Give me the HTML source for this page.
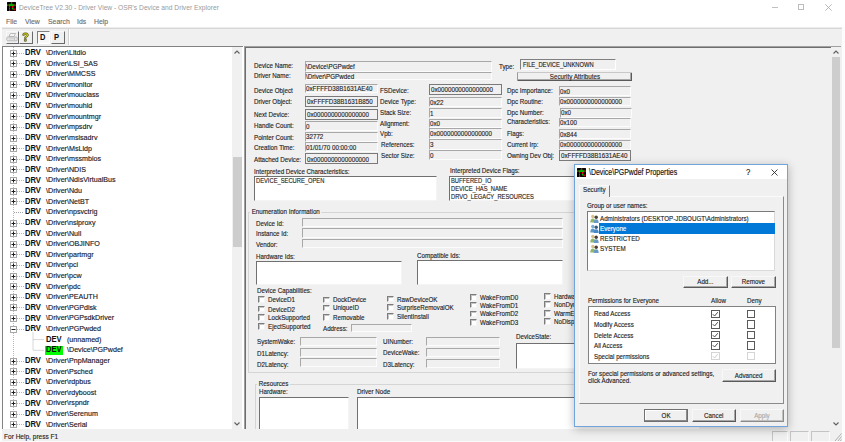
<!DOCTYPE html><html><head><meta charset="utf-8"><style>
html,body{margin:0;padding:0;width:845px;height:442px;overflow:hidden;background:#f0f0f0;font-family:"Liberation Sans",sans-serif;position:relative}
div,span,svg{position:absolute}
.t{white-space:nowrap;transform-origin:0 50%;display:block;-webkit-text-stroke:0.15px currentColor}
</style></head><body>
<div style="left:0px;top:0px;width:845px;height:442px;background:#fcfcfc"></div>
<div style="left:0px;top:0px;width:845px;height:27px;background:#fff"></div>
<svg style="left:7px;top:2px" width="9" height="9" viewBox="0 0 9 9"><rect width="9" height="9" rx="0.5" fill="#000"/><rect x="1.5" y="2.3" width="6" height="1.6" fill="#0c0"/><rect x="3.5" y="1.5" width="2" height="1" fill="#0c0"/><rect x="2" y="6" width="1" height="1.2" fill="#0a0"/><path d="M5 6L6.5 7.5" stroke="#0c0" stroke-width="1.2"/><rect x="4" y="0" width="1.2" height="1.8" fill="#f00"/><rect x="0" y="2.3" width="1.2" height="1.8" fill="#f00"/><rect x="7.6" y="2.3" width="1.2" height="1.8" fill="#f00"/><rect x="2" y="4" width="1.2" height="1.8" fill="#f00"/><rect x="5" y="4" width="1.2" height="1.8" fill="#f00"/><rect x="2" y="7.2" width="1.2" height="1.8" fill="#f00"/><rect x="7.2" y="6.5" width="1.2" height="1.8" fill="#f00"/></svg>
<span class="t" style="left:19px;top:2px;font-size:8px;line-height:12px;transform:scaleX(0.835);color:#9a9a9a;-webkit-text-stroke:0">DeviceTree V2.30 - Driver View - OSR's Device and Driver Explorer</span>
<div style="left:772px;top:7px;width:6px;height:1px;background:#c0c0c0"></div>
<div style="left:798px;top:3.5px;width:6.2999999999999545px;height:6.300000000000001px;border:1px solid #bcbcbc;box-sizing:border-box"></div>
<svg style="left:825px;top:3.5px" width="7" height="7" viewBox="0 0 7 7"><path d="M0.3 0.3L6.7 6.7M6.7 0.3L0.3 6.7" stroke="#a8a8a8" stroke-width="0.8"/></svg>
<span class="t" style="left:6px;top:16px;font-size:7.8px;line-height:12px;transform:scaleX(0.88);color:#6e6e6e;">File</span>
<span class="t" style="left:25px;top:16px;font-size:7.8px;line-height:12px;transform:scaleX(0.88);color:#6e6e6e;">View</span>
<span class="t" style="left:48px;top:16px;font-size:7.8px;line-height:12px;transform:scaleX(0.88);color:#6e6e6e;">Search</span>
<span class="t" style="left:77px;top:16px;font-size:7.8px;line-height:12px;transform:scaleX(0.88);color:#6e6e6e;">Ids</span>
<span class="t" style="left:94px;top:16px;font-size:7.8px;line-height:12px;transform:scaleX(0.88);color:#6e6e6e;">Help</span>
<div style="left:2px;top:27px;width:839.5px;height:415px;background:#f0f0f0"></div>
<div style="left:2px;top:27px;width:839.5px;height:1px;background:#ececec"></div>
<div style="left:2px;top:28px;width:839.5px;height:1px;background:#d6d6d6"></div>
<div style="left:5.5px;top:31px;width:13.0px;height:12.5px;background:#f0f0f0;border-top:1px solid #f8f8f8;border-left:1px solid #f8f8f8;border-bottom:1px solid #6a6a6a;border-right:1px solid #6a6a6a;box-sizing:border-box"></div>
<div style="left:18.5px;top:31px;width:14.0px;height:12.5px;background:#f0f0f0;border-top:1px solid #f8f8f8;border-left:1px solid #f8f8f8;border-bottom:1px solid #6a6a6a;border-right:1px solid #6a6a6a;box-sizing:border-box"></div>
<div style="left:37px;top:31px;width:13px;height:12.5px;background:#f8f8f8;border-top:1px solid #808080;border-left:1px solid #808080;border-bottom:1px solid #fff;border-right:1px solid #fff;box-sizing:border-box"></div>
<div style="left:50.5px;top:31px;width:14.0px;height:12.5px;background:#f0f0f0;border-top:1px solid #f8f8f8;border-left:1px solid #f8f8f8;border-bottom:1px solid #6a6a6a;border-right:1px solid #6a6a6a;box-sizing:border-box"></div>
<svg style="left:6px;top:31px" width="12" height="12" viewBox="0 0 12 12"><path d="M4.5 2.5L9.5 2.5L8 5.5L3 5.5Z" fill="#f4f4f4" stroke="#b4b4b4" stroke-width="0.9"/><path d="M1.8 6H10.2Q11.2 6 11.2 7V8.8Q11.2 9.8 10.2 9.8H1.8Q0.8 9.8 0.8 8.8V7Q0.8 6 1.8 6Z" fill="#ececec" stroke="#b0b0b0" stroke-width="0.9"/><path d="M2.5 7.9H8" stroke="#c4c4c4" stroke-width="0.9"/><circle cx="8.6" cy="7.9" r="0.6" fill="#a0a0a0"/></svg>
<svg style="left:21px;top:32px" width="9" height="10" viewBox="0 0 9 10"><path d="M1.6 3.2Q1.6 0.8 4.4 0.8Q7.4 0.8 7.4 3.1Q7.4 4.4 5.8 5.1Q5.2 5.4 5.2 6.3H3.5Q3.5 4.8 4.6 4.2Q5.6 3.7 5.5 3.1Q5.4 2.3 4.4 2.3Q3.4 2.3 3.3 3.4Z M3.4 7.2H5.3V9.2H3.4Z" fill="#e6e600" stroke="#3a3a20" stroke-width="0.7"/></svg>
<span class="t" style="left:40.3px;top:32px;font-size:8.2px;line-height:12px;transform:scaleX(0.92);color:#111;font-weight:bold;-webkit-text-stroke:0;">D</span>
<span class="t" style="left:54.4px;top:32px;font-size:8.2px;line-height:12px;transform:scaleX(0.92);color:#111;font-weight:bold;-webkit-text-stroke:0;">P</span>
<div style="left:68px;top:29px;width:1px;height:16px;background:#d0d0d0"></div>
<div style="left:69px;top:29px;width:1px;height:16px;background:#ffffff"></div>
<div style="left:2px;top:46px;width:240.5px;height:383px;background:#fff;border-top:1px solid #828282;border-left:1px solid #828282;box-sizing:border-box"></div>
<div style="left:232px;top:47px;width:10px;height:382px;background:#f0f0f0"></div>
<div style="left:232.5px;top:157px;width:9.0px;height:90px;background:#cdcdcd"></div>
<svg style="left:233px;top:49px" width="8" height="6" viewBox="0 0 8 6"><path d="M1.5 4.5L4 2L6.5 4.5" stroke="#606060" stroke-width="1.1" fill="none"/></svg>
<svg style="left:233px;top:421px" width="8" height="6" viewBox="0 0 8 6"><path d="M1.5 1.5L4 4L6.5 1.5" stroke="#606060" stroke-width="1.1" fill="none"/></svg>
<svg style="left:0;top:0" width="242" height="429" viewBox="0 0 242 429"><path d="M13.5 47V424.1" stroke="#b8b8b8" stroke-width="1" stroke-dasharray="1 1"/><rect x="10.5" y="50.5" width="6" height="6" fill="#fff" stroke="#a8a8a8" stroke-width="1"/><rect x="11.5" y="53" width="4" height="1" fill="#202020"/><rect x="13" y="51.5" width="1" height="4" fill="#202020"/><path d="M17 53.5H24" stroke="#b8b8b8" stroke-width="1" stroke-dasharray="1 1"/><rect x="10.5" y="60.5" width="6" height="6" fill="#fff" stroke="#a8a8a8" stroke-width="1"/><rect x="11.5" y="63" width="4" height="1" fill="#202020"/><rect x="13" y="61.5" width="1" height="4" fill="#202020"/><path d="M17 63.5H24" stroke="#b8b8b8" stroke-width="1" stroke-dasharray="1 1"/><rect x="10.5" y="71.5" width="6" height="6" fill="#fff" stroke="#a8a8a8" stroke-width="1"/><rect x="11.5" y="74" width="4" height="1" fill="#202020"/><rect x="13" y="72.5" width="1" height="4" fill="#202020"/><path d="M17 74.5H24" stroke="#b8b8b8" stroke-width="1" stroke-dasharray="1 1"/><rect x="10.5" y="81.5" width="6" height="6" fill="#fff" stroke="#a8a8a8" stroke-width="1"/><rect x="11.5" y="84" width="4" height="1" fill="#202020"/><rect x="13" y="82.5" width="1" height="4" fill="#202020"/><path d="M17 84.5H24" stroke="#b8b8b8" stroke-width="1" stroke-dasharray="1 1"/><rect x="10.5" y="92.5" width="6" height="6" fill="#fff" stroke="#a8a8a8" stroke-width="1"/><rect x="11.5" y="95" width="4" height="1" fill="#202020"/><rect x="13" y="93.5" width="1" height="4" fill="#202020"/><path d="M17 95.5H24" stroke="#b8b8b8" stroke-width="1" stroke-dasharray="1 1"/><rect x="10.5" y="103.5" width="6" height="6" fill="#fff" stroke="#a8a8a8" stroke-width="1"/><rect x="11.5" y="106" width="4" height="1" fill="#202020"/><rect x="13" y="104.5" width="1" height="4" fill="#202020"/><path d="M17 106.5H24" stroke="#b8b8b8" stroke-width="1" stroke-dasharray="1 1"/><rect x="10.5" y="113.5" width="6" height="6" fill="#fff" stroke="#a8a8a8" stroke-width="1"/><rect x="11.5" y="116" width="4" height="1" fill="#202020"/><rect x="13" y="114.5" width="1" height="4" fill="#202020"/><path d="M17 116.5H24" stroke="#b8b8b8" stroke-width="1" stroke-dasharray="1 1"/><rect x="10.5" y="124.5" width="6" height="6" fill="#fff" stroke="#a8a8a8" stroke-width="1"/><rect x="11.5" y="127" width="4" height="1" fill="#202020"/><rect x="13" y="125.5" width="1" height="4" fill="#202020"/><path d="M17 127.5H24" stroke="#b8b8b8" stroke-width="1" stroke-dasharray="1 1"/><rect x="10.5" y="135.5" width="6" height="6" fill="#fff" stroke="#a8a8a8" stroke-width="1"/><rect x="11.5" y="138" width="4" height="1" fill="#202020"/><rect x="13" y="136.5" width="1" height="4" fill="#202020"/><path d="M17 138.5H24" stroke="#b8b8b8" stroke-width="1" stroke-dasharray="1 1"/><rect x="10.5" y="145.5" width="6" height="6" fill="#fff" stroke="#a8a8a8" stroke-width="1"/><rect x="11.5" y="148" width="4" height="1" fill="#202020"/><rect x="13" y="146.5" width="1" height="4" fill="#202020"/><path d="M17 148.5H24" stroke="#b8b8b8" stroke-width="1" stroke-dasharray="1 1"/><rect x="10.5" y="156.5" width="6" height="6" fill="#fff" stroke="#a8a8a8" stroke-width="1"/><rect x="11.5" y="159" width="4" height="1" fill="#202020"/><rect x="13" y="157.5" width="1" height="4" fill="#202020"/><path d="M17 159.5H24" stroke="#b8b8b8" stroke-width="1" stroke-dasharray="1 1"/><rect x="10.5" y="166.5" width="6" height="6" fill="#fff" stroke="#a8a8a8" stroke-width="1"/><rect x="11.5" y="169" width="4" height="1" fill="#202020"/><rect x="13" y="167.5" width="1" height="4" fill="#202020"/><path d="M17 169.5H24" stroke="#b8b8b8" stroke-width="1" stroke-dasharray="1 1"/><rect x="10.5" y="177.5" width="6" height="6" fill="#fff" stroke="#a8a8a8" stroke-width="1"/><rect x="11.5" y="180" width="4" height="1" fill="#202020"/><rect x="13" y="178.5" width="1" height="4" fill="#202020"/><path d="M17 180.5H24" stroke="#b8b8b8" stroke-width="1" stroke-dasharray="1 1"/><rect x="10.5" y="188.5" width="6" height="6" fill="#fff" stroke="#a8a8a8" stroke-width="1"/><rect x="11.5" y="191" width="4" height="1" fill="#202020"/><rect x="13" y="189.5" width="1" height="4" fill="#202020"/><path d="M17 191.5H24" stroke="#b8b8b8" stroke-width="1" stroke-dasharray="1 1"/><rect x="10.5" y="198.5" width="6" height="6" fill="#fff" stroke="#a8a8a8" stroke-width="1"/><rect x="11.5" y="201" width="4" height="1" fill="#202020"/><rect x="13" y="199.5" width="1" height="4" fill="#202020"/><path d="M17 201.5H24" stroke="#b8b8b8" stroke-width="1" stroke-dasharray="1 1"/><path d="M14 212.5H24" stroke="#a0a0a0" stroke-width="1" stroke-dasharray="1 1"/><rect x="10.5" y="220.5" width="6" height="6" fill="#fff" stroke="#a8a8a8" stroke-width="1"/><rect x="11.5" y="223" width="4" height="1" fill="#202020"/><rect x="13" y="221.5" width="1" height="4" fill="#202020"/><path d="M17 223.5H24" stroke="#b8b8b8" stroke-width="1" stroke-dasharray="1 1"/><rect x="10.5" y="230.5" width="6" height="6" fill="#fff" stroke="#a8a8a8" stroke-width="1"/><rect x="11.5" y="233" width="4" height="1" fill="#202020"/><rect x="13" y="231.5" width="1" height="4" fill="#202020"/><path d="M17 233.5H24" stroke="#b8b8b8" stroke-width="1" stroke-dasharray="1 1"/><rect x="10.5" y="241.5" width="6" height="6" fill="#fff" stroke="#a8a8a8" stroke-width="1"/><rect x="11.5" y="244" width="4" height="1" fill="#202020"/><rect x="13" y="242.5" width="1" height="4" fill="#202020"/><path d="M17 244.5H24" stroke="#b8b8b8" stroke-width="1" stroke-dasharray="1 1"/><rect x="10.5" y="251.5" width="6" height="6" fill="#fff" stroke="#a8a8a8" stroke-width="1"/><rect x="11.5" y="254" width="4" height="1" fill="#202020"/><rect x="13" y="252.5" width="1" height="4" fill="#202020"/><path d="M17 254.5H24" stroke="#b8b8b8" stroke-width="1" stroke-dasharray="1 1"/><rect x="10.5" y="262.5" width="6" height="6" fill="#fff" stroke="#a8a8a8" stroke-width="1"/><rect x="11.5" y="265" width="4" height="1" fill="#202020"/><rect x="13" y="263.5" width="1" height="4" fill="#202020"/><path d="M17 265.5H24" stroke="#b8b8b8" stroke-width="1" stroke-dasharray="1 1"/><rect x="10.5" y="273.5" width="6" height="6" fill="#fff" stroke="#a8a8a8" stroke-width="1"/><rect x="11.5" y="276" width="4" height="1" fill="#202020"/><rect x="13" y="274.5" width="1" height="4" fill="#202020"/><path d="M17 276.5H24" stroke="#b8b8b8" stroke-width="1" stroke-dasharray="1 1"/><rect x="10.5" y="283.5" width="6" height="6" fill="#fff" stroke="#a8a8a8" stroke-width="1"/><rect x="11.5" y="286" width="4" height="1" fill="#202020"/><rect x="13" y="284.5" width="1" height="4" fill="#202020"/><path d="M17 286.5H24" stroke="#b8b8b8" stroke-width="1" stroke-dasharray="1 1"/><rect x="10.5" y="294.5" width="6" height="6" fill="#fff" stroke="#a8a8a8" stroke-width="1"/><rect x="11.5" y="297" width="4" height="1" fill="#202020"/><rect x="13" y="295.5" width="1" height="4" fill="#202020"/><path d="M17 297.5H24" stroke="#b8b8b8" stroke-width="1" stroke-dasharray="1 1"/><rect x="10.5" y="304.5" width="6" height="6" fill="#fff" stroke="#a8a8a8" stroke-width="1"/><rect x="11.5" y="307" width="4" height="1" fill="#202020"/><rect x="13" y="305.5" width="1" height="4" fill="#202020"/><path d="M17 307.5H24" stroke="#b8b8b8" stroke-width="1" stroke-dasharray="1 1"/><rect x="10.5" y="315.5" width="6" height="6" fill="#fff" stroke="#a8a8a8" stroke-width="1"/><rect x="11.5" y="318" width="4" height="1" fill="#202020"/><rect x="13" y="316.5" width="1" height="4" fill="#202020"/><path d="M17 318.5H24" stroke="#b8b8b8" stroke-width="1" stroke-dasharray="1 1"/><rect x="10.5" y="326.5" width="6" height="6" fill="#fff" stroke="#a8a8a8" stroke-width="1"/><rect x="11.5" y="329" width="4" height="1" fill="#202020"/><path d="M17 329.5H24" stroke="#b8b8b8" stroke-width="1" stroke-dasharray="1 1"/><rect x="10.5" y="358.5" width="6" height="6" fill="#fff" stroke="#a8a8a8" stroke-width="1"/><rect x="11.5" y="361" width="4" height="1" fill="#202020"/><rect x="13" y="359.5" width="1" height="4" fill="#202020"/><path d="M17 361.5H24" stroke="#b8b8b8" stroke-width="1" stroke-dasharray="1 1"/><rect x="10.5" y="368.5" width="6" height="6" fill="#fff" stroke="#a8a8a8" stroke-width="1"/><rect x="11.5" y="371" width="4" height="1" fill="#202020"/><rect x="13" y="369.5" width="1" height="4" fill="#202020"/><path d="M17 371.5H24" stroke="#b8b8b8" stroke-width="1" stroke-dasharray="1 1"/><rect x="10.5" y="379.5" width="6" height="6" fill="#fff" stroke="#a8a8a8" stroke-width="1"/><rect x="11.5" y="382" width="4" height="1" fill="#202020"/><rect x="13" y="380.5" width="1" height="4" fill="#202020"/><path d="M17 382.5H24" stroke="#b8b8b8" stroke-width="1" stroke-dasharray="1 1"/><rect x="10.5" y="389.5" width="6" height="6" fill="#fff" stroke="#a8a8a8" stroke-width="1"/><rect x="11.5" y="392" width="4" height="1" fill="#202020"/><rect x="13" y="390.5" width="1" height="4" fill="#202020"/><path d="M17 392.5H24" stroke="#b8b8b8" stroke-width="1" stroke-dasharray="1 1"/><rect x="10.5" y="400.5" width="6" height="6" fill="#fff" stroke="#a8a8a8" stroke-width="1"/><rect x="11.5" y="403" width="4" height="1" fill="#202020"/><rect x="13" y="401.5" width="1" height="4" fill="#202020"/><path d="M17 403.5H24" stroke="#b8b8b8" stroke-width="1" stroke-dasharray="1 1"/><rect x="10.5" y="411.5" width="6" height="6" fill="#fff" stroke="#a8a8a8" stroke-width="1"/><rect x="11.5" y="414" width="4" height="1" fill="#202020"/><rect x="13" y="412.5" width="1" height="4" fill="#202020"/><path d="M17 414.5H24" stroke="#b8b8b8" stroke-width="1" stroke-dasharray="1 1"/><rect x="10.5" y="421.5" width="6" height="6" fill="#fff" stroke="#a8a8a8" stroke-width="1"/><rect x="11.5" y="424" width="4" height="1" fill="#202020"/><rect x="13" y="422.5" width="1" height="4" fill="#202020"/><path d="M17 424.5H24" stroke="#b8b8b8" stroke-width="1" stroke-dasharray="1 1"/><path d="M33 332.5V350.3" stroke="#b0b0b0" stroke-width="1" stroke-dasharray="1 1"/><path d="M33.5 339.6H44M33.5 350.3H44" stroke="#b0b0b0" stroke-width="1" stroke-dasharray="1 1"/></svg>
<span class="t" style="left:25.3px;top:47px;font-size:8.2px;line-height:12px;transform:scaleX(0.93);color:#111;font-weight:bold;-webkit-text-stroke:0;">DRV</span>
<span class="t" style="left:45.5px;top:47px;font-size:7.5px;line-height:12px;transform:scaleX(0.95);color:#1a1a28;">\Driver\Lltdio</span>
<span class="t" style="left:25.3px;top:58px;font-size:8.2px;line-height:12px;transform:scaleX(0.93);color:#111;font-weight:bold;-webkit-text-stroke:0;">DRV</span>
<span class="t" style="left:45.5px;top:58px;font-size:7.5px;line-height:12px;transform:scaleX(0.95);color:#1a1a28;">\Driver\LSI_SAS</span>
<span class="t" style="left:25.3px;top:68px;font-size:8.2px;line-height:12px;transform:scaleX(0.93);color:#111;font-weight:bold;-webkit-text-stroke:0;">DRV</span>
<span class="t" style="left:45.5px;top:68px;font-size:7.5px;line-height:12px;transform:scaleX(0.95);color:#1a1a28;">\Driver\MMCSS</span>
<span class="t" style="left:25.3px;top:79px;font-size:8.2px;line-height:12px;transform:scaleX(0.93);color:#111;font-weight:bold;-webkit-text-stroke:0;">DRV</span>
<span class="t" style="left:45.5px;top:79px;font-size:7.5px;line-height:12px;transform:scaleX(0.95);color:#1a1a28;">\Driver\monitor</span>
<span class="t" style="left:25.3px;top:90px;font-size:8.2px;line-height:12px;transform:scaleX(0.93);color:#111;font-weight:bold;-webkit-text-stroke:0;">DRV</span>
<span class="t" style="left:45.5px;top:89px;font-size:7.5px;line-height:12px;transform:scaleX(0.95);color:#1a1a28;">\Driver\mouclass</span>
<span class="t" style="left:25.3px;top:100px;font-size:8.2px;line-height:12px;transform:scaleX(0.93);color:#111;font-weight:bold;-webkit-text-stroke:0;">DRV</span>
<span class="t" style="left:45.5px;top:100px;font-size:7.5px;line-height:12px;transform:scaleX(0.95);color:#1a1a28;">\Driver\mouhid</span>
<span class="t" style="left:25.3px;top:111px;font-size:8.2px;line-height:12px;transform:scaleX(0.93);color:#111;font-weight:bold;-webkit-text-stroke:0;">DRV</span>
<span class="t" style="left:45.5px;top:111px;font-size:7.5px;line-height:12px;transform:scaleX(0.95);color:#1a1a28;">\Driver\mountmgr</span>
<span class="t" style="left:25.3px;top:121px;font-size:8.2px;line-height:12px;transform:scaleX(0.93);color:#111;font-weight:bold;-webkit-text-stroke:0;">DRV</span>
<span class="t" style="left:45.5px;top:121px;font-size:7.5px;line-height:12px;transform:scaleX(0.95);color:#1a1a28;">\Driver\mpsdrv</span>
<span class="t" style="left:25.3px;top:132px;font-size:8.2px;line-height:12px;transform:scaleX(0.93);color:#111;font-weight:bold;-webkit-text-stroke:0;">DRV</span>
<span class="t" style="left:45.5px;top:132px;font-size:7.5px;line-height:12px;transform:scaleX(0.95);color:#1a1a28;">\Driver\msisadrv</span>
<span class="t" style="left:25.3px;top:143px;font-size:8.2px;line-height:12px;transform:scaleX(0.93);color:#111;font-weight:bold;-webkit-text-stroke:0;">DRV</span>
<span class="t" style="left:45.5px;top:143px;font-size:7.5px;line-height:12px;transform:scaleX(0.95);color:#1a1a28;">\Driver\MsLldp</span>
<span class="t" style="left:25.3px;top:153px;font-size:8.2px;line-height:12px;transform:scaleX(0.93);color:#111;font-weight:bold;-webkit-text-stroke:0;">DRV</span>
<span class="t" style="left:45.5px;top:153px;font-size:7.5px;line-height:12px;transform:scaleX(0.95);color:#1a1a28;">\Driver\mssmbios</span>
<span class="t" style="left:25.3px;top:164px;font-size:8.2px;line-height:12px;transform:scaleX(0.93);color:#111;font-weight:bold;-webkit-text-stroke:0;">DRV</span>
<span class="t" style="left:45.5px;top:164px;font-size:7.5px;line-height:12px;transform:scaleX(0.95);color:#1a1a28;">\Driver\NDIS</span>
<span class="t" style="left:25.3px;top:175px;font-size:8.2px;line-height:12px;transform:scaleX(0.93);color:#111;font-weight:bold;-webkit-text-stroke:0;">DRV</span>
<span class="t" style="left:45.5px;top:174px;font-size:7.5px;line-height:12px;transform:scaleX(0.95);color:#1a1a28;">\Driver\NdisVirtualBus</span>
<span class="t" style="left:25.3px;top:185px;font-size:8.2px;line-height:12px;transform:scaleX(0.93);color:#111;font-weight:bold;-webkit-text-stroke:0;">DRV</span>
<span class="t" style="left:45.5px;top:185px;font-size:7.5px;line-height:12px;transform:scaleX(0.95);color:#1a1a28;">\Driver\Ndu</span>
<span class="t" style="left:25.3px;top:196px;font-size:8.2px;line-height:12px;transform:scaleX(0.93);color:#111;font-weight:bold;-webkit-text-stroke:0;">DRV</span>
<span class="t" style="left:45.5px;top:196px;font-size:7.5px;line-height:12px;transform:scaleX(0.95);color:#1a1a28;">\Driver\NetBT</span>
<span class="t" style="left:25.3px;top:206px;font-size:8.2px;line-height:12px;transform:scaleX(0.93);color:#111;font-weight:bold;-webkit-text-stroke:0;">DRV</span>
<span class="t" style="left:45.5px;top:206px;font-size:7.5px;line-height:12px;transform:scaleX(0.95);color:#1a1a28;">\Driver\npsvctrig</span>
<span class="t" style="left:25.3px;top:217px;font-size:8.2px;line-height:12px;transform:scaleX(0.93);color:#111;font-weight:bold;-webkit-text-stroke:0;">DRV</span>
<span class="t" style="left:45.5px;top:217px;font-size:7.5px;line-height:12px;transform:scaleX(0.95);color:#1a1a28;">\Driver\nsiproxy</span>
<span class="t" style="left:25.3px;top:228px;font-size:8.2px;line-height:12px;transform:scaleX(0.93);color:#111;font-weight:bold;-webkit-text-stroke:0;">DRV</span>
<span class="t" style="left:45.5px;top:228px;font-size:7.5px;line-height:12px;transform:scaleX(0.95);color:#1a1a28;">\Driver\Null</span>
<span class="t" style="left:25.3px;top:238px;font-size:8.2px;line-height:12px;transform:scaleX(0.93);color:#111;font-weight:bold;-webkit-text-stroke:0;">DRV</span>
<span class="t" style="left:45.5px;top:238px;font-size:7.5px;line-height:12px;transform:scaleX(0.95);color:#1a1a28;">\Driver\OBJINFO</span>
<span class="t" style="left:25.3px;top:249px;font-size:8.2px;line-height:12px;transform:scaleX(0.93);color:#111;font-weight:bold;-webkit-text-stroke:0;">DRV</span>
<span class="t" style="left:45.5px;top:249px;font-size:7.5px;line-height:12px;transform:scaleX(0.95);color:#1a1a28;">\Driver\partmgr</span>
<span class="t" style="left:25.3px;top:260px;font-size:8.2px;line-height:12px;transform:scaleX(0.93);color:#111;font-weight:bold;-webkit-text-stroke:0;">DRV</span>
<span class="t" style="left:45.5px;top:259px;font-size:7.5px;line-height:12px;transform:scaleX(0.95);color:#1a1a28;">\Driver\pci</span>
<span class="t" style="left:25.3px;top:270px;font-size:8.2px;line-height:12px;transform:scaleX(0.93);color:#111;font-weight:bold;-webkit-text-stroke:0;">DRV</span>
<span class="t" style="left:45.5px;top:270px;font-size:7.5px;line-height:12px;transform:scaleX(0.95);color:#1a1a28;">\Driver\pcw</span>
<span class="t" style="left:25.3px;top:281px;font-size:8.2px;line-height:12px;transform:scaleX(0.93);color:#111;font-weight:bold;-webkit-text-stroke:0;">DRV</span>
<span class="t" style="left:45.5px;top:281px;font-size:7.5px;line-height:12px;transform:scaleX(0.95);color:#1a1a28;">\Driver\pdc</span>
<span class="t" style="left:25.3px;top:291px;font-size:8.2px;line-height:12px;transform:scaleX(0.93);color:#111;font-weight:bold;-webkit-text-stroke:0;">DRV</span>
<span class="t" style="left:45.5px;top:291px;font-size:7.5px;line-height:12px;transform:scaleX(0.95);color:#1a1a28;">\Driver\PEAUTH</span>
<span class="t" style="left:25.3px;top:302px;font-size:8.2px;line-height:12px;transform:scaleX(0.93);color:#111;font-weight:bold;-webkit-text-stroke:0;">DRV</span>
<span class="t" style="left:45.5px;top:302px;font-size:7.5px;line-height:12px;transform:scaleX(0.95);color:#1a1a28;">\Driver\PGPdisk</span>
<span class="t" style="left:25.3px;top:313px;font-size:8.2px;line-height:12px;transform:scaleX(0.93);color:#111;font-weight:bold;-webkit-text-stroke:0;">DRV</span>
<span class="t" style="left:45.5px;top:312px;font-size:7.5px;line-height:12px;transform:scaleX(0.95);color:#1a1a28;">\Driver\PGPsdkDriver</span>
<span class="t" style="left:25.3px;top:323px;font-size:8.2px;line-height:12px;transform:scaleX(0.93);color:#111;font-weight:bold;-webkit-text-stroke:0;">DRV</span>
<span class="t" style="left:45.5px;top:323px;font-size:7.5px;line-height:12px;transform:scaleX(0.95);color:#1a1a28;">\Driver\PGPwded</span>
<span class="t" style="left:25.3px;top:355px;font-size:8.2px;line-height:12px;transform:scaleX(0.93);color:#111;font-weight:bold;-webkit-text-stroke:0;">DRV</span>
<span class="t" style="left:45.5px;top:355px;font-size:7.5px;line-height:12px;transform:scaleX(0.95);color:#1a1a28;">\Driver\PnpManager</span>
<span class="t" style="left:25.3px;top:366px;font-size:8.2px;line-height:12px;transform:scaleX(0.93);color:#111;font-weight:bold;-webkit-text-stroke:0;">DRV</span>
<span class="t" style="left:45.5px;top:366px;font-size:7.5px;line-height:12px;transform:scaleX(0.95);color:#1a1a28;">\Driver\Psched</span>
<span class="t" style="left:25.3px;top:376px;font-size:8.2px;line-height:12px;transform:scaleX(0.93);color:#111;font-weight:bold;-webkit-text-stroke:0;">DRV</span>
<span class="t" style="left:45.5px;top:376px;font-size:7.5px;line-height:12px;transform:scaleX(0.95);color:#1a1a28;">\Driver\rdpbus</span>
<span class="t" style="left:25.3px;top:387px;font-size:8.2px;line-height:12px;transform:scaleX(0.93);color:#111;font-weight:bold;-webkit-text-stroke:0;">DRV</span>
<span class="t" style="left:45.5px;top:387px;font-size:7.5px;line-height:12px;transform:scaleX(0.95);color:#1a1a28;">\Driver\rdyboost</span>
<span class="t" style="left:25.3px;top:398px;font-size:8.2px;line-height:12px;transform:scaleX(0.93);color:#111;font-weight:bold;-webkit-text-stroke:0;">DRV</span>
<span class="t" style="left:45.5px;top:397px;font-size:7.5px;line-height:12px;transform:scaleX(0.95);color:#1a1a28;">\Driver\rspndr</span>
<span class="t" style="left:25.3px;top:408px;font-size:8.2px;line-height:12px;transform:scaleX(0.93);color:#111;font-weight:bold;-webkit-text-stroke:0;">DRV</span>
<span class="t" style="left:45.5px;top:408px;font-size:7.5px;line-height:12px;transform:scaleX(0.95);color:#1a1a28;">\Driver\Serenum</span>
<span class="t" style="left:25.3px;top:419px;font-size:8.2px;line-height:12px;transform:scaleX(0.93);color:#111;font-weight:bold;-webkit-text-stroke:0;">DRV</span>
<span class="t" style="left:45.5px;top:419px;font-size:7.5px;line-height:12px;transform:scaleX(0.95);color:#1a1a28;">\Driver\Serial</span>
<span class="t" style="left:46px;top:334px;font-size:8.2px;line-height:12px;transform:scaleX(0.93);color:#111;font-weight:bold;-webkit-text-stroke:0;">DEV</span>
<span class="t" style="left:66.5px;top:334px;font-size:7.5px;line-height:12px;transform:scaleX(0.95);color:#1a1a28;">(unnamed)</span>
<div style="left:44.6px;top:345.55999999999995px;width:18.4px;height:9.199999999999989px;background:#00ff00"></div>
<span class="t" style="left:46px;top:344px;font-size:8.2px;line-height:12px;transform:scaleX(0.93);color:#111;font-weight:bold;-webkit-text-stroke:0;">DEV</span>
<span class="t" style="left:66.5px;top:344px;font-size:7.5px;line-height:12px;transform:scaleX(0.95);color:#1a1a28;">\Device\PGPwdef</span>
<div style="left:244px;top:46px;width:597.3px;height:383px;background:#f0f0f0;border-top:1px solid #a0a0a0;border-left:1px solid #a0a0a0;box-shadow:inset 1px 1px 0 #6e6e6e;box-sizing:border-box"></div>
<div style="left:242.5px;top:46px;width:1.0px;height:383px;background:#ffffff"></div>
<div style="left:831px;top:47px;width:10px;height:382px;background:#f0f0f0"></div>
<div style="left:832px;top:57px;width:8.299999999999955px;height:290.5px;background:#cdcdcd"></div>
<svg style="left:832px;top:49px" width="8" height="6" viewBox="0 0 8 6"><path d="M1.5 4.5L4 2L6.5 4.5" stroke="#606060" stroke-width="1.1" fill="none"/></svg>
<svg style="left:832px;top:421px" width="8" height="6" viewBox="0 0 8 6"><path d="M1.5 1.5L4 4L6.5 1.5" stroke="#606060" stroke-width="1.1" fill="none"/></svg>
<span class="t" style="left:253.6px;top:60px;font-size:7.6px;line-height:12px;transform:scaleX(0.82);color:#1e1e1e;">Device Name:</span>
<span class="t" style="left:253.6px;top:70px;font-size:7.6px;line-height:12px;transform:scaleX(0.82);color:#1e1e1e;">Driver Name:</span>
<div style="left:305px;top:61.2px;width:186.60000000000002px;height:10.5px;background:#f0f0f0;border-top:1px solid #a8a8a8;border-left:1px solid #a8a8a8;border-bottom:1px solid #fcfcfc;border-right:1px solid #fcfcfc;box-sizing:border-box"></div>
<span class="t" style="left:306px;top:61px;font-size:7.6px;line-height:12px;transform:scaleX(0.82);color:#1e1e1e;">\Device\PGPwdef</span>
<div style="left:305px;top:71.7px;width:186.60000000000002px;height:8.5px;background:#f0f0f0;border-top:1px solid #a8a8a8;border-left:1px solid #a8a8a8;border-bottom:1px solid #fcfcfc;border-right:1px solid #fcfcfc;box-sizing:border-box"></div>
<span class="t" style="left:306px;top:71px;font-size:7.6px;line-height:12px;transform:scaleX(0.82);color:#1e1e1e;">\Driver\PGPwded</span>
<span class="t" style="left:498.7px;top:61px;font-size:7.6px;line-height:12px;transform:scaleX(0.82);color:#1e1e1e;">Type:</span>
<div style="left:520.3px;top:59.2px;width:96.20000000000005px;height:10.599999999999994px;background:#f0f0f0;border-top:1px solid #808080;border-left:1px solid #808080;border-bottom:1px solid #fff;border-right:1px solid #fff;box-sizing:border-box"></div>
<span class="t" style="left:522.5px;top:59px;font-size:7.6px;line-height:12px;transform:scaleX(0.76);color:#1e1e1e;">FILE_DEVICE_UNKNOWN</span>
<div style="left:516.5px;top:71.7px;width:115.89999999999998px;height:9.099999999999994px;background:#f0f0f0;border-top:1px solid #f8f8f8;border-left:1px solid #f8f8f8;border-bottom:1px solid #5a5a5a;border-right:1px solid #5a5a5a;box-shadow:inset -1px -1px 0 #a8a8a8;box-sizing:border-box"></div>
<span class="t" style="left:516.5px;top:71.7px;width:141.3px;height:9.099999999999994px;line-height:9.099999999999994px;text-align:center;font-size:7.6px;transform:scaleX(0.82);color:#1e1e1e">Security Attributes</span>
<div style="left:516.5px;top:71.7px;width:115.89999999999998px;height:9.099999999999994px;border-left:1px solid #9a9a9a;border-top:1px solid #c8c8c8;box-sizing:border-box"></div>
<span class="t" style="left:253.5px;top:85px;font-size:7.6px;line-height:12px;transform:scaleX(0.82);color:#1e1e1e;">Device Object</span>
<div style="left:305px;top:84px;width:72.5px;height:9.200000000000003px;background:#f0f0f0;border-top:1px solid #a8a8a8;border-left:1px solid #a8a8a8;border-bottom:1px solid #fcfcfc;border-right:1px solid #fcfcfc;box-sizing:border-box"></div>
<span class="t" style="left:306px;top:83px;font-size:7.6px;line-height:12px;transform:scaleX(0.82);color:#1e1e1e;">0xFFFFD38B1631AE40</span>
<span class="t" style="left:253.5px;top:96px;font-size:7.6px;line-height:12px;transform:scaleX(0.82);color:#1e1e1e;">Driver Object:</span>
<div style="left:305px;top:96.3px;width:72.5px;height:11.200000000000003px;background:#f0f0f0;border:1px solid #7a7a7a;box-sizing:border-box"></div>
<span class="t" style="left:307px;top:96px;font-size:7.6px;line-height:12px;transform:scaleX(0.82);color:#1e1e1e;">0xFFFFD38B1631B850</span>
<span class="t" style="left:253.5px;top:109px;font-size:7.6px;line-height:12px;transform:scaleX(0.82);color:#1e1e1e;">Next Device:</span>
<div style="left:305px;top:108.5px;width:72.5px;height:11.200000000000003px;background:#f0f0f0;border:1px solid #7a7a7a;box-sizing:border-box"></div>
<span class="t" style="left:307px;top:109px;font-size:7.6px;line-height:12px;transform:scaleX(0.82);color:#1e1e1e;">0x0000000000000000</span>
<span class="t" style="left:253.5px;top:120px;font-size:7.6px;line-height:12px;transform:scaleX(0.82);color:#1e1e1e;">Handle Count:</span>
<div style="left:305px;top:121.2px;width:72.5px;height:9.600000000000009px;background:#f0f0f0;border-top:1px solid #a8a8a8;border-left:1px solid #a8a8a8;border-bottom:1px solid #fcfcfc;border-right:1px solid #fcfcfc;box-sizing:border-box"></div>
<span class="t" style="left:306px;top:121px;font-size:7.6px;line-height:12px;transform:scaleX(0.82);color:#1e1e1e;">0</span>
<span class="t" style="left:253.5px;top:132px;font-size:7.6px;line-height:12px;transform:scaleX(0.82);color:#1e1e1e;">Pointer Count:</span>
<div style="left:305px;top:131.8px;width:72.5px;height:9.799999999999983px;background:#f0f0f0;border-top:1px solid #a8a8a8;border-left:1px solid #a8a8a8;border-bottom:1px solid #fcfcfc;border-right:1px solid #fcfcfc;box-sizing:border-box"></div>
<span class="t" style="left:306px;top:131px;font-size:7.6px;line-height:12px;transform:scaleX(0.82);color:#1e1e1e;">32772</span>
<span class="t" style="left:253.5px;top:142px;font-size:7.6px;line-height:12px;transform:scaleX(0.82);color:#1e1e1e;">Creation Time:</span>
<div style="left:305px;top:142.2px;width:72.5px;height:10.200000000000017px;background:#f0f0f0;border-top:1px solid #a8a8a8;border-left:1px solid #a8a8a8;border-bottom:1px solid #fcfcfc;border-right:1px solid #fcfcfc;box-sizing:border-box"></div>
<span class="t" style="left:306px;top:142px;font-size:7.6px;line-height:12px;transform:scaleX(0.82);color:#1e1e1e;">01/01/70 00:00:00</span>
<span class="t" style="left:253.5px;top:154px;font-size:7.6px;line-height:12px;transform:scaleX(0.82);color:#1e1e1e;">Attached Device:</span>
<div style="left:305px;top:153.3px;width:72.5px;height:11.199999999999989px;background:#f0f0f0;border:1px solid #7a7a7a;box-sizing:border-box"></div>
<span class="t" style="left:307px;top:154px;font-size:7.6px;line-height:12px;transform:scaleX(0.82);color:#1e1e1e;">0x0000000000000000</span>
<span class="t" style="left:379.8px;top:85px;font-size:7.6px;line-height:12px;transform:scaleX(0.82);color:#1e1e1e;">FSDevice:</span>
<div style="left:429px;top:84.4px;width:72.5px;height:10.899999999999991px;background:#f0f0f0;border:1px solid #7a7a7a;box-sizing:border-box"></div>
<span class="t" style="left:431px;top:84px;font-size:7.6px;line-height:12px;transform:scaleX(0.82);color:#1e1e1e;">0x0000000000000000</span>
<span class="t" style="left:379.8px;top:96px;font-size:7.6px;line-height:12px;transform:scaleX(0.82);color:#1e1e1e;">Device Type:</span>
<div style="left:429px;top:97.3px;width:72.5px;height:10.200000000000003px;background:#f0f0f0;border-top:1px solid #a8a8a8;border-left:1px solid #a8a8a8;border-bottom:1px solid #fcfcfc;border-right:1px solid #fcfcfc;box-sizing:border-box"></div>
<span class="t" style="left:430px;top:97px;font-size:7.6px;line-height:12px;transform:scaleX(0.82);color:#1e1e1e;">0x22</span>
<span class="t" style="left:379.8px;top:107px;font-size:7.6px;line-height:12px;transform:scaleX(0.82);color:#1e1e1e;">Stack Size:</span>
<div style="left:429px;top:108px;width:72.5px;height:10.200000000000003px;background:#f0f0f0;border-top:1px solid #a8a8a8;border-left:1px solid #a8a8a8;border-bottom:1px solid #fcfcfc;border-right:1px solid #fcfcfc;box-sizing:border-box"></div>
<span class="t" style="left:430px;top:108px;font-size:7.6px;line-height:12px;transform:scaleX(0.82);color:#1e1e1e;">1</span>
<span class="t" style="left:379.8px;top:118px;font-size:7.6px;line-height:12px;transform:scaleX(0.82);color:#1e1e1e;">Alignment:</span>
<div style="left:429px;top:118.7px;width:72.5px;height:9.499999999999986px;background:#f0f0f0;border-top:1px solid #a8a8a8;border-left:1px solid #a8a8a8;border-bottom:1px solid #fcfcfc;border-right:1px solid #fcfcfc;box-sizing:border-box"></div>
<span class="t" style="left:430px;top:118px;font-size:7.6px;line-height:12px;transform:scaleX(0.82);color:#1e1e1e;">0x0</span>
<span class="t" style="left:379.8px;top:128px;font-size:7.6px;line-height:12px;transform:scaleX(0.82);color:#1e1e1e;">Vpb:</span>
<div style="left:429px;top:128.4px;width:72.5px;height:10.400000000000006px;background:#f0f0f0;border-top:1px solid #a8a8a8;border-left:1px solid #a8a8a8;border-bottom:1px solid #fcfcfc;border-right:1px solid #fcfcfc;box-sizing:border-box"></div>
<span class="t" style="left:430px;top:128px;font-size:7.6px;line-height:12px;transform:scaleX(0.82);color:#1e1e1e;">0x0000000000000000</span>
<span class="t" style="left:381px;top:139px;font-size:7.6px;line-height:12px;transform:scaleX(0.82);color:#1e1e1e;">References:</span>
<div style="left:429px;top:139.4px;width:72.5px;height:10.199999999999989px;background:#f0f0f0;border-top:1px solid #a8a8a8;border-left:1px solid #a8a8a8;border-bottom:1px solid #fcfcfc;border-right:1px solid #fcfcfc;box-sizing:border-box"></div>
<span class="t" style="left:430px;top:139px;font-size:7.6px;line-height:12px;transform:scaleX(0.82);color:#1e1e1e;">3</span>
<span class="t" style="left:381px;top:150px;font-size:7.6px;line-height:12px;transform:scaleX(0.82);color:#1e1e1e;">Sector Size:</span>
<div style="left:429px;top:150.2px;width:72.5px;height:9.600000000000023px;background:#f0f0f0;border-top:1px solid #a8a8a8;border-left:1px solid #a8a8a8;border-bottom:1px solid #fcfcfc;border-right:1px solid #fcfcfc;box-sizing:border-box"></div>
<span class="t" style="left:430px;top:150px;font-size:7.6px;line-height:12px;transform:scaleX(0.82);color:#1e1e1e;">0</span>
<span class="t" style="left:506.7px;top:85px;font-size:7.6px;line-height:12px;transform:scaleX(0.82);color:#1e1e1e;">Dpc Importance:</span>
<div style="left:558.6px;top:86.3px;width:72.0px;height:9.400000000000006px;background:#f0f0f0;border-top:1px solid #a8a8a8;border-left:1px solid #a8a8a8;border-bottom:1px solid #fcfcfc;border-right:1px solid #fcfcfc;box-sizing:border-box"></div>
<span class="t" style="left:559.6px;top:86px;font-size:7.6px;line-height:12px;transform:scaleX(0.82);color:#1e1e1e;">0x0</span>
<span class="t" style="left:506.7px;top:96px;font-size:7.6px;line-height:12px;transform:scaleX(0.82);color:#1e1e1e;">Dpc Routine:</span>
<div style="left:558.6px;top:96.5px;width:72.0px;height:9.700000000000003px;background:#f0f0f0;border-top:1px solid #a8a8a8;border-left:1px solid #a8a8a8;border-bottom:1px solid #fcfcfc;border-right:1px solid #fcfcfc;box-sizing:border-box"></div>
<span class="t" style="left:559.6px;top:96px;font-size:7.6px;line-height:12px;transform:scaleX(0.82);color:#1e1e1e;">0x0000000000000000</span>
<span class="t" style="left:506.7px;top:107px;font-size:7.6px;line-height:12px;transform:scaleX(0.82);color:#1e1e1e;">Dpc Number:</span>
<div style="left:560px;top:107.5px;width:72px;height:10.0px;background:#f0f0f0;border-top:1px solid #a8a8a8;border-left:1px solid #a8a8a8;border-bottom:1px solid #fcfcfc;border-right:1px solid #fcfcfc;box-sizing:border-box"></div>
<span class="t" style="left:561px;top:107px;font-size:7.6px;line-height:12px;transform:scaleX(0.82);color:#1e1e1e;">0x0</span>
<span class="t" style="left:506.7px;top:116px;font-size:7.6px;line-height:12px;transform:scaleX(0.82);color:#1e1e1e;">Characteristics:</span>
<div style="left:558.6px;top:117.6px;width:72.0px;height:9.400000000000006px;background:#f0f0f0;border-top:1px solid #a8a8a8;border-left:1px solid #a8a8a8;border-bottom:1px solid #fcfcfc;border-right:1px solid #fcfcfc;box-sizing:border-box"></div>
<span class="t" style="left:559.6px;top:117px;font-size:7.6px;line-height:12px;transform:scaleX(0.82);color:#1e1e1e;">0x100</span>
<span class="t" style="left:506.7px;top:128px;font-size:7.6px;line-height:12px;transform:scaleX(0.82);color:#1e1e1e;">Flags:</span>
<div style="left:558.6px;top:129.2px;width:72.0px;height:9.600000000000023px;background:#f0f0f0;border-top:1px solid #a8a8a8;border-left:1px solid #a8a8a8;border-bottom:1px solid #fcfcfc;border-right:1px solid #fcfcfc;box-sizing:border-box"></div>
<span class="t" style="left:559.6px;top:129px;font-size:7.6px;line-height:12px;transform:scaleX(0.82);color:#1e1e1e;">0x844</span>
<span class="t" style="left:506.7px;top:139px;font-size:7.6px;line-height:12px;transform:scaleX(0.82);color:#1e1e1e;">Current Irp:</span>
<div style="left:558.6px;top:140px;width:72.0px;height:9.599999999999994px;background:#f0f0f0;border-top:1px solid #a8a8a8;border-left:1px solid #a8a8a8;border-bottom:1px solid #fcfcfc;border-right:1px solid #fcfcfc;box-sizing:border-box"></div>
<span class="t" style="left:559.6px;top:139px;font-size:7.6px;line-height:12px;transform:scaleX(0.82);color:#1e1e1e;">0x0000000000000000</span>
<span class="t" style="left:506.7px;top:150px;font-size:7.6px;line-height:12px;transform:scaleX(0.82);color:#1e1e1e;">Owning Dev Obj:</span>
<div style="left:558.6px;top:150.2px;width:72.0px;height:10.800000000000011px;background:#f0f0f0;border:1px solid #7a7a7a;box-sizing:border-box"></div>
<span class="t" style="left:560.6px;top:150px;font-size:7.6px;line-height:12px;transform:scaleX(0.82);color:#1e1e1e;">0xFFFFD38B1631AE40</span>
<span class="t" style="left:254px;top:166px;font-size:7.6px;line-height:12px;transform:scaleX(0.82);color:#1e1e1e;">Interpreted Device Characteristics:</span>
<div style="left:254px;top:176.1px;width:182.7px;height:25.30000000000001px;background:#fff;border-top:1px solid #707070;border-left:1px solid #707070;border-bottom:1px solid #f4f4f4;border-right:1px solid #f4f4f4;box-sizing:border-box"></div>
<span class="t" style="left:256px;top:175px;font-size:7.6px;line-height:12px;transform:scaleX(0.76);color:#1e1e1e;">DEVICE_SECURE_OPEN</span>
<span class="t" style="left:450px;top:165px;font-size:7.6px;line-height:12px;transform:scaleX(0.82);color:#1e1e1e;">Interpreted Device Flags:</span>
<div style="left:449px;top:176px;width:191px;height:25.400000000000006px;background:#fff;border-top:1px solid #707070;border-left:1px solid #707070;border-bottom:1px solid #f4f4f4;border-right:1px solid #f4f4f4;box-sizing:border-box"></div>
<span class="t" style="left:451px;top:175px;font-size:7.6px;line-height:12px;transform:scaleX(0.76);color:#1e1e1e;">BUFFERED_IO</span>
<span class="t" style="left:451px;top:183px;font-size:7.6px;line-height:12px;transform:scaleX(0.76);color:#1e1e1e;">DEVICE_HAS_NAME</span>
<span class="t" style="left:451px;top:191px;font-size:7.6px;line-height:12px;transform:scaleX(0.76);color:#1e1e1e;">DRVO_LEGACY_RESOURCES</span>
<div style="left:247.6px;top:211.7px;width:392.4px;height:161.3px;border:1px solid #d5d5d5;box-sizing:border-box"></div>
<span class="t" style="left:250.3px;top:207.2px;font-size:7.6px;line-height:9px;transform:scaleX(0.82);background:#f0f0f0;padding:0 2px;color:#1e1e1e">Enumeration Information</span>
<span class="t" style="left:256.2px;top:218px;font-size:7.6px;line-height:12px;transform:scaleX(0.82);color:#1e1e1e;">Device Id:</span>
<span class="t" style="left:256.2px;top:228px;font-size:7.6px;line-height:12px;transform:scaleX(0.82);color:#1e1e1e;">Instance Id:</span>
<span class="t" style="left:256.2px;top:239px;font-size:7.6px;line-height:12px;transform:scaleX(0.82);color:#1e1e1e;">Vendor:</span>
<div style="left:301.7px;top:217.5px;width:261.40000000000003px;height:9.5px;background:#f0f0f0;border-top:1px solid #a8a8a8;border-left:1px solid #a8a8a8;border-bottom:1px solid #fcfcfc;border-right:1px solid #fcfcfc;box-sizing:border-box"></div>
<div style="left:301.7px;top:228px;width:261.40000000000003px;height:9.5px;background:#f0f0f0;border-top:1px solid #a8a8a8;border-left:1px solid #a8a8a8;border-bottom:1px solid #fcfcfc;border-right:1px solid #fcfcfc;box-sizing:border-box"></div>
<div style="left:301.7px;top:238.7px;width:261.40000000000003px;height:9.300000000000011px;background:#f0f0f0;border-top:1px solid #a8a8a8;border-left:1px solid #a8a8a8;border-bottom:1px solid #fcfcfc;border-right:1px solid #fcfcfc;box-sizing:border-box"></div>
<span class="t" style="left:256.2px;top:251px;font-size:7.6px;line-height:12px;transform:scaleX(0.82);color:#1e1e1e;">Hardware Ids:</span>
<div style="left:256.2px;top:260.8px;width:146.2px;height:23.80000000000001px;background:#fff;border-top:1px solid #707070;border-left:1px solid #707070;border-bottom:1px solid #f4f4f4;border-right:1px solid #f4f4f4;box-sizing:border-box"></div>
<span class="t" style="left:416.5px;top:250px;font-size:7.6px;line-height:12px;transform:scaleX(0.82);color:#1e1e1e;">Compatible Ids:</span>
<div style="left:417px;top:260.1px;width:145.70000000000005px;height:24.69999999999999px;background:#fff;border-top:1px solid #707070;border-left:1px solid #707070;border-bottom:1px solid #f4f4f4;border-right:1px solid #f4f4f4;box-sizing:border-box"></div>
<span class="t" style="left:256.8px;top:285px;font-size:7.6px;line-height:12px;transform:scaleX(0.82);color:#1e1e1e;">Device Capabilities:</span>
<div style="left:257.5px;top:295.9px;width:7.0px;height:6.800000000000011px;background:#fff;border-top:1px solid #7c7c7c;border-left:1px solid #7c7c7c;border-bottom:1px solid #f4f4f4;border-right:1px solid #f4f4f4;box-shadow:inset 1px 1px 0 #c4c4c4;box-sizing:border-box"></div>
<span class="t" style="left:267.6px;top:294px;font-size:7.6px;line-height:12px;transform:scaleX(0.82);color:#1e1e1e;">DeviceD1</span>
<div style="left:257.5px;top:305.7px;width:7.0px;height:6.800000000000011px;background:#fff;border-top:1px solid #7c7c7c;border-left:1px solid #7c7c7c;border-bottom:1px solid #f4f4f4;border-right:1px solid #f4f4f4;box-shadow:inset 1px 1px 0 #c4c4c4;box-sizing:border-box"></div>
<span class="t" style="left:267.6px;top:304px;font-size:7.6px;line-height:12px;transform:scaleX(0.82);color:#1e1e1e;">DeviceD2</span>
<div style="left:257.5px;top:314.0px;width:7.0px;height:6.800000000000011px;background:#fff;border-top:1px solid #7c7c7c;border-left:1px solid #7c7c7c;border-bottom:1px solid #f4f4f4;border-right:1px solid #f4f4f4;box-shadow:inset 1px 1px 0 #c4c4c4;box-sizing:border-box"></div>
<span class="t" style="left:267.6px;top:312px;font-size:7.6px;line-height:12px;transform:scaleX(0.82);color:#1e1e1e;">LockSupported</span>
<div style="left:257.5px;top:323.09999999999997px;width:7.0px;height:6.800000000000011px;background:#fff;border-top:1px solid #7c7c7c;border-left:1px solid #7c7c7c;border-bottom:1px solid #f4f4f4;border-right:1px solid #f4f4f4;box-shadow:inset 1px 1px 0 #c4c4c4;box-sizing:border-box"></div>
<span class="t" style="left:267.6px;top:321px;font-size:7.6px;line-height:12px;transform:scaleX(0.82);color:#1e1e1e;">EjectSupported</span>
<div style="left:322.5px;top:296.59999999999997px;width:7.0px;height:6.800000000000011px;background:#fff;border-top:1px solid #7c7c7c;border-left:1px solid #7c7c7c;border-bottom:1px solid #f4f4f4;border-right:1px solid #f4f4f4;box-shadow:inset 1px 1px 0 #c4c4c4;box-sizing:border-box"></div>
<span class="t" style="left:332.8px;top:294px;font-size:7.6px;line-height:12px;transform:scaleX(0.82);color:#1e1e1e;">DockDevice</span>
<div style="left:322.5px;top:304.5px;width:7.0px;height:6.800000000000011px;background:#fff;border-top:1px solid #7c7c7c;border-left:1px solid #7c7c7c;border-bottom:1px solid #f4f4f4;border-right:1px solid #f4f4f4;box-shadow:inset 1px 1px 0 #c4c4c4;box-sizing:border-box"></div>
<span class="t" style="left:332.8px;top:302px;font-size:7.6px;line-height:12px;transform:scaleX(0.82);color:#1e1e1e;">UniqueID</span>
<div style="left:322.5px;top:314.0px;width:7.0px;height:6.800000000000011px;background:#fff;border-top:1px solid #7c7c7c;border-left:1px solid #7c7c7c;border-bottom:1px solid #f4f4f4;border-right:1px solid #f4f4f4;box-shadow:inset 1px 1px 0 #c4c4c4;box-sizing:border-box"></div>
<span class="t" style="left:332.8px;top:312px;font-size:7.6px;line-height:12px;transform:scaleX(0.82);color:#1e1e1e;">Removable</span>
<div style="left:386.5px;top:295.59999999999997px;width:7.0px;height:6.800000000000011px;background:#fff;border-top:1px solid #7c7c7c;border-left:1px solid #7c7c7c;border-bottom:1px solid #f4f4f4;border-right:1px solid #f4f4f4;box-shadow:inset 1px 1px 0 #c4c4c4;box-sizing:border-box"></div>
<span class="t" style="left:396.6px;top:294px;font-size:7.6px;line-height:12px;transform:scaleX(0.82);color:#1e1e1e;">RawDeviceOK</span>
<div style="left:386.5px;top:304.4px;width:7.0px;height:6.800000000000011px;background:#fff;border-top:1px solid #7c7c7c;border-left:1px solid #7c7c7c;border-bottom:1px solid #f4f4f4;border-right:1px solid #f4f4f4;box-shadow:inset 1px 1px 0 #c4c4c4;box-sizing:border-box"></div>
<span class="t" style="left:396.6px;top:302px;font-size:7.6px;line-height:12px;transform:scaleX(0.82);color:#1e1e1e;">SurpriseRemovalOK</span>
<div style="left:386.5px;top:313.4px;width:7.0px;height:6.800000000000011px;background:#fff;border-top:1px solid #7c7c7c;border-left:1px solid #7c7c7c;border-bottom:1px solid #f4f4f4;border-right:1px solid #f4f4f4;box-shadow:inset 1px 1px 0 #c4c4c4;box-sizing:border-box"></div>
<span class="t" style="left:396.6px;top:311px;font-size:7.6px;line-height:12px;transform:scaleX(0.82);color:#1e1e1e;">SilentInstall</span>
<div style="left:469.79999999999995px;top:294.0px;width:7.0px;height:6.800000000000011px;background:#fff;border-top:1px solid #7c7c7c;border-left:1px solid #7c7c7c;border-bottom:1px solid #f4f4f4;border-right:1px solid #f4f4f4;box-shadow:inset 1px 1px 0 #c4c4c4;box-sizing:border-box"></div>
<span class="t" style="left:479.9px;top:292px;font-size:7.6px;line-height:12px;transform:scaleX(0.82);color:#1e1e1e;">WakeFromD0</span>
<div style="left:469.79999999999995px;top:301.59999999999997px;width:7.0px;height:6.800000000000011px;background:#fff;border-top:1px solid #7c7c7c;border-left:1px solid #7c7c7c;border-bottom:1px solid #f4f4f4;border-right:1px solid #f4f4f4;box-shadow:inset 1px 1px 0 #c4c4c4;box-sizing:border-box"></div>
<span class="t" style="left:479.9px;top:300px;font-size:7.6px;line-height:12px;transform:scaleX(0.82);color:#1e1e1e;">WakeFromD1</span>
<div style="left:469.79999999999995px;top:310.5px;width:7.0px;height:6.800000000000011px;background:#fff;border-top:1px solid #7c7c7c;border-left:1px solid #7c7c7c;border-bottom:1px solid #f4f4f4;border-right:1px solid #f4f4f4;box-shadow:inset 1px 1px 0 #c4c4c4;box-sizing:border-box"></div>
<span class="t" style="left:479.9px;top:308px;font-size:7.6px;line-height:12px;transform:scaleX(0.82);color:#1e1e1e;">WakeFromD2</span>
<div style="left:469.79999999999995px;top:318.8px;width:7.0px;height:6.800000000000011px;background:#fff;border-top:1px solid #7c7c7c;border-left:1px solid #7c7c7c;border-bottom:1px solid #f4f4f4;border-right:1px solid #f4f4f4;box-shadow:inset 1px 1px 0 #c4c4c4;box-sizing:border-box"></div>
<span class="t" style="left:479.9px;top:317px;font-size:7.6px;line-height:12px;transform:scaleX(0.82);color:#1e1e1e;">WakeFromD3</span>
<div style="left:543.9px;top:292.8px;width:7.0px;height:6.800000000000011px;background:#fff;border-top:1px solid #7c7c7c;border-left:1px solid #7c7c7c;border-bottom:1px solid #f4f4f4;border-right:1px solid #f4f4f4;box-shadow:inset 1px 1px 0 #c4c4c4;box-sizing:border-box"></div>
<span class="t" style="left:554px;top:291px;font-size:7.6px;line-height:12px;transform:scaleX(0.82);color:#1e1e1e;">HardwareDisabled</span>
<div style="left:543.9px;top:301.09999999999997px;width:7.0px;height:6.800000000000011px;background:#fff;border-top:1px solid #7c7c7c;border-left:1px solid #7c7c7c;border-bottom:1px solid #f4f4f4;border-right:1px solid #f4f4f4;box-shadow:inset 1px 1px 0 #c4c4c4;box-sizing:border-box"></div>
<span class="t" style="left:554px;top:299px;font-size:7.6px;line-height:12px;transform:scaleX(0.82);color:#1e1e1e;">NonDynamic</span>
<div style="left:543.9px;top:309.8px;width:7.0px;height:6.800000000000011px;background:#fff;border-top:1px solid #7c7c7c;border-left:1px solid #7c7c7c;border-bottom:1px solid #f4f4f4;border-right:1px solid #f4f4f4;box-shadow:inset 1px 1px 0 #c4c4c4;box-sizing:border-box"></div>
<span class="t" style="left:554px;top:308px;font-size:7.6px;line-height:12px;transform:scaleX(0.82);color:#1e1e1e;">WarmEjectSupported</span>
<div style="left:543.9px;top:318.09999999999997px;width:7.0px;height:6.800000000000011px;background:#fff;border-top:1px solid #7c7c7c;border-left:1px solid #7c7c7c;border-bottom:1px solid #f4f4f4;border-right:1px solid #f4f4f4;box-shadow:inset 1px 1px 0 #c4c4c4;box-sizing:border-box"></div>
<span class="t" style="left:554px;top:316px;font-size:7.6px;line-height:12px;transform:scaleX(0.82);color:#1e1e1e;">NoDisplayInUI</span>
<span class="t" style="left:323.1px;top:323px;font-size:7.6px;line-height:12px;transform:scaleX(0.82);color:#1e1e1e;">Address:</span>
<div style="left:351.4px;top:324.1px;width:61.10000000000002px;height:8.0px;background:#f0f0f0;border-top:1px solid #a8a8a8;border-left:1px solid #a8a8a8;border-bottom:1px solid #fcfcfc;border-right:1px solid #fcfcfc;box-sizing:border-box"></div>
<span class="t" style="left:256.8px;top:336px;font-size:7.6px;line-height:12px;transform:scaleX(0.82);color:#1e1e1e;">SystemWake:</span>
<span class="t" style="left:256.8px;top:348px;font-size:7.6px;line-height:12px;transform:scaleX(0.82);color:#1e1e1e;">D1Latency:</span>
<span class="t" style="left:256.8px;top:359px;font-size:7.6px;line-height:12px;transform:scaleX(0.82);color:#1e1e1e;">D2Latency:</span>
<div style="left:299.8px;top:337px;width:77.59999999999997px;height:8.600000000000023px;background:#f0f0f0;border-top:1px solid #a8a8a8;border-left:1px solid #a8a8a8;border-bottom:1px solid #fcfcfc;border-right:1px solid #fcfcfc;box-sizing:border-box"></div>
<div style="left:299.8px;top:347.5px;width:77.59999999999997px;height:9.0px;background:#f0f0f0;border-top:1px solid #a8a8a8;border-left:1px solid #a8a8a8;border-bottom:1px solid #fcfcfc;border-right:1px solid #fcfcfc;box-sizing:border-box"></div>
<div style="left:299.8px;top:358px;width:77.59999999999997px;height:9.100000000000023px;background:#f0f0f0;border-top:1px solid #a8a8a8;border-left:1px solid #a8a8a8;border-bottom:1px solid #fcfcfc;border-right:1px solid #fcfcfc;box-sizing:border-box"></div>
<span class="t" style="left:383px;top:336px;font-size:7.6px;line-height:12px;transform:scaleX(0.82);color:#1e1e1e;">UINumber:</span>
<span class="t" style="left:383px;top:347px;font-size:7.6px;line-height:12px;transform:scaleX(0.82);color:#1e1e1e;">DeviceWake:</span>
<span class="t" style="left:383px;top:359px;font-size:7.6px;line-height:12px;transform:scaleX(0.82);color:#1e1e1e;">D3Latency:</span>
<div style="left:426.2px;top:336.8px;width:73.80000000000001px;height:9.0px;background:#f0f0f0;border-top:1px solid #a8a8a8;border-left:1px solid #a8a8a8;border-bottom:1px solid #fcfcfc;border-right:1px solid #fcfcfc;box-sizing:border-box"></div>
<div style="left:426.2px;top:348.2px;width:73.80000000000001px;height:8.800000000000011px;background:#f0f0f0;border-top:1px solid #a8a8a8;border-left:1px solid #a8a8a8;border-bottom:1px solid #fcfcfc;border-right:1px solid #fcfcfc;box-sizing:border-box"></div>
<div style="left:426.2px;top:358.8px;width:73.80000000000001px;height:8.800000000000011px;background:#f0f0f0;border-top:1px solid #a8a8a8;border-left:1px solid #a8a8a8;border-bottom:1px solid #fcfcfc;border-right:1px solid #fcfcfc;box-sizing:border-box"></div>
<span class="t" style="left:516.1px;top:331px;font-size:7.6px;line-height:12px;transform:scaleX(0.82);color:#1e1e1e;">DeviceState:</span>
<div style="left:516.1px;top:342.7px;width:123.89999999999998px;height:26.100000000000023px;background:#fff;border-top:1px solid #707070;border-left:1px solid #707070;border-bottom:1px solid #f4f4f4;border-right:1px solid #f4f4f4;box-sizing:border-box"></div>
<div style="left:254.7px;top:383.5px;width:445.3px;height:56.5px;border:1px solid #d5d5d5;box-sizing:border-box"></div>
<span class="t" style="left:256.7px;top:379.0px;font-size:7.6px;line-height:9px;transform:scaleX(0.82);background:#f0f0f0;padding:0 2px;color:#1e1e1e">Resources</span>
<span class="t" style="left:259px;top:386px;font-size:7.6px;line-height:12px;transform:scaleX(0.82);color:#1e1e1e;">Hardware:</span>
<div style="left:259.1px;top:396.8px;width:89.5px;height:43.19999999999999px;background:#fff;border-top:1px solid #707070;border-left:1px solid #707070;border-bottom:1px solid #f4f4f4;border-right:1px solid #f4f4f4;box-sizing:border-box"></div>
<span class="t" style="left:356.7px;top:386px;font-size:7.6px;line-height:12px;transform:scaleX(0.82);color:#1e1e1e;">Driver Node</span>
<div style="left:356.7px;top:397px;width:343.3px;height:43px;background:#fff;border-top:1px solid #707070;border-left:1px solid #707070;border-bottom:1px solid #f4f4f4;border-right:1px solid #f4f4f4;box-sizing:border-box"></div>
<div style="left:2px;top:429px;width:840px;height:13px;background:#f0f0f0"></div>
<span class="t" style="left:3.5px;top:431px;font-size:7.8px;line-height:12px;transform:scaleX(0.84);color:#1e1e1e;">For Help, press F1</span>
<div style="left:772.3px;top:431px;width:15.900000000000091px;height:11px;border-top:1px solid #c4c4c4;border-left:1px solid #c4c4c4;border-right:1px solid #fafafa;box-sizing:border-box"></div>
<div style="left:790px;top:431px;width:19.299999999999955px;height:11px;border-top:1px solid #c4c4c4;border-left:1px solid #c4c4c4;border-right:1px solid #fafafa;box-sizing:border-box"></div>
<div style="left:811.3px;top:431px;width:18.600000000000023px;height:11px;border-top:1px solid #c4c4c4;border-left:1px solid #c4c4c4;border-right:1px solid #fafafa;box-sizing:border-box"></div>
<svg style="left:834px;top:432px" width="8" height="10" viewBox="0 0 8 10"><path d="M7.5 1.5L1 9M7.5 4.5L4 9M7.5 7.5L6.3 9" stroke="#a8a8a8" stroke-width="0.9"/></svg>
<div style="left:0px;top:441px;width:845px;height:1px;background:#fafafa"></div>
<div style="left:574px;top:164.3px;width:213.5px;height:262.5px;background:#f0f0f0;border:1px solid #70a4dc;box-sizing:border-box;box-shadow:0 2px 9px rgba(0,0,0,0.28)"></div>
<div style="left:575px;top:165.3px;width:211.5px;height:14.199999999999989px;background:#fff"></div>
<svg style="left:577px;top:167.5px" width="9" height="9" viewBox="0 0 9 9"><rect width="9" height="9" rx="0.5" fill="#000"/><rect x="1.5" y="2.3" width="6" height="1.6" fill="#0c0"/><rect x="3.5" y="1.5" width="2" height="1" fill="#0c0"/><rect x="2" y="6" width="1" height="1.2" fill="#0a0"/><path d="M5 6L6.5 7.5" stroke="#0c0" stroke-width="1.2"/><rect x="4" y="0" width="1.2" height="1.8" fill="#f00"/><rect x="0" y="2.3" width="1.2" height="1.8" fill="#f00"/><rect x="7.6" y="2.3" width="1.2" height="1.8" fill="#f00"/><rect x="2" y="4" width="1.2" height="1.8" fill="#f00"/><rect x="5" y="4" width="1.2" height="1.8" fill="#f00"/><rect x="2" y="7.2" width="1.2" height="1.8" fill="#f00"/><rect x="7.2" y="6.5" width="1.2" height="1.8" fill="#f00"/></svg>
<span class="t" style="left:589px;top:166px;font-size:8.6px;line-height:12px;transform:scaleX(0.81);color:#111;">\Device\PGPwdef Properties</span>
<span class="t" style="left:745.6px;top:166px;font-size:8.6px;line-height:12px;transform:scaleX(0.9);color:#1a1a1a;">?</span>
<svg style="left:771px;top:169px" width="7" height="7" viewBox="0 0 7 7"><path d="M0.5 0.5L6.5 6.5M6.5 0.5L0.5 6.5" stroke="#222" stroke-width="0.85"/></svg>
<div style="left:578.8px;top:195.6px;width:205.0px;height:208.9px;background:#f0f0f0;border:1px solid #fafafa;border-right-color:#8a8a8a;border-bottom-color:#8a8a8a;box-sizing:border-box"></div>
<div style="left:579px;top:184.6px;width:31px;height:12.0px;background:#f0f0f0;border:1px solid #fafafa;border-bottom:none;border-right:1px solid #7a7a7a;box-sizing:border-box"></div>
<span class="t" style="left:583px;top:184px;font-size:7.6px;line-height:12px;transform:scaleX(0.82);color:#1e1e1e;">Security</span>
<span class="t" style="left:587.2px;top:200px;font-size:7.6px;line-height:12px;transform:scaleX(0.82);color:#1e1e1e;">Group or user names:</span>
<div style="left:587px;top:211.2px;width:188px;height:59.80000000000001px;background:#fff;border-top:1px solid #7a7a7a;border-left:1px solid #7a7a7a;border-right:1px solid #dadada;border-bottom:1px solid #dadada;box-sizing:border-box"></div>
<svg style="left:589.5px;top:213.7px" width="9" height="9" viewBox="0 0 9 9"><circle cx="2.8" cy="2.5" r="1.7" fill="#d8c088"/><path d="M0.3 8.5C0.3 5.5 1.3 4.5 2.8 4.5S5.3 5.5 5.3 8.5z" fill="#90b860"/><circle cx="6.2" cy="3.2" r="1.7" fill="#4a4038"/><path d="M3.7 9C3.7 6.2 4.7 5.2 6.2 5.2S8.7 6.2 8.7 9z" fill="#6a9ac8"/></svg>
<span class="t" style="left:600px;top:213px;font-size:7.6px;line-height:12px;transform:scaleX(0.82);color:#1e1e1e;">Administrators (DESKTOP-JDBOUGT\Administrators)</span>
<div style="left:598.6px;top:223.1px;width:176.0px;height:10.5px;background:#0078d7"></div>
<svg style="left:589.5px;top:224.1px" width="9" height="9" viewBox="0 0 9 9"><circle cx="2.8" cy="2.5" r="1.7" fill="#7ab0d8"/><path d="M0.3 8.5C0.3 5.5 1.3 4.5 2.8 4.5S5.3 5.5 5.3 8.5z" fill="#5a98c8"/><circle cx="6.2" cy="3.2" r="1.7" fill="#3a5a80"/><path d="M3.7 9C3.7 6.2 4.7 5.2 6.2 5.2S8.7 6.2 8.7 9z" fill="#4a88c8"/></svg>
<span class="t" style="left:600px;top:223px;font-size:7.6px;line-height:12px;transform:scaleX(0.82);color:#fff;">Everyone</span>
<svg style="left:589.5px;top:234.0px" width="9" height="9" viewBox="0 0 9 9"><circle cx="2.8" cy="2.5" r="1.7" fill="#d8c088"/><path d="M0.3 8.5C0.3 5.5 1.3 4.5 2.8 4.5S5.3 5.5 5.3 8.5z" fill="#90b860"/><circle cx="6.2" cy="3.2" r="1.7" fill="#4a4038"/><path d="M3.7 9C3.7 6.2 4.7 5.2 6.2 5.2S8.7 6.2 8.7 9z" fill="#6a9ac8"/></svg>
<span class="t" style="left:600px;top:233px;font-size:7.6px;line-height:12px;transform:scaleX(0.82);color:#1e1e1e;">RESTRICTED</span>
<svg style="left:589.5px;top:244.0px" width="9" height="9" viewBox="0 0 9 9"><circle cx="2.8" cy="2.5" r="1.7" fill="#d8c088"/><path d="M0.3 8.5C0.3 5.5 1.3 4.5 2.8 4.5S5.3 5.5 5.3 8.5z" fill="#90b860"/><circle cx="6.2" cy="3.2" r="1.7" fill="#4a4038"/><path d="M3.7 9C3.7 6.2 4.7 5.2 6.2 5.2S8.7 6.2 8.7 9z" fill="#6a9ac8"/></svg>
<span class="t" style="left:600px;top:243px;font-size:7.6px;line-height:12px;transform:scaleX(0.82);color:#1e1e1e;">SYSTEM</span>
<div style="left:683.1px;top:275.8px;width:44.799999999999955px;height:12.399999999999977px;background:#f0f0f0;border-top:1px solid #f8f8f8;border-left:1px solid #f8f8f8;border-bottom:1px solid #5a5a5a;border-right:1px solid #5a5a5a;box-shadow:inset -1px -1px 0 #a8a8a8;box-sizing:border-box"></div>
<span class="t" style="left:683.1px;top:275.8px;width:54.6px;height:12.399999999999977px;line-height:12.399999999999977px;text-align:center;font-size:7.6px;transform:scaleX(0.82);color:#1e1e1e">Add...</span>
<div style="left:730.8px;top:275.8px;width:44.80000000000007px;height:12.399999999999977px;background:#f0f0f0;border-top:1px solid #f8f8f8;border-left:1px solid #f8f8f8;border-bottom:1px solid #5a5a5a;border-right:1px solid #5a5a5a;box-shadow:inset -1px -1px 0 #a8a8a8;box-sizing:border-box"></div>
<span class="t" style="left:730.8px;top:275.8px;width:54.6px;height:12.399999999999977px;line-height:12.399999999999977px;text-align:center;font-size:7.6px;transform:scaleX(0.82);color:#1e1e1e">Remove</span>
<span class="t" style="left:587.5px;top:295px;font-size:7.6px;line-height:12px;transform:scaleX(0.82);color:#1e1e1e;">Permissions for Everyone</span>
<span class="t" style="left:710.5px;top:295px;font-size:7.6px;line-height:12px;transform:scaleX(0.82);color:#1e1e1e;">Allow</span>
<span class="t" style="left:746.5px;top:295px;font-size:7.6px;line-height:12px;transform:scaleX(0.82);color:#1e1e1e;">Deny</span>
<div style="left:587.5px;top:306.2px;width:188.29999999999995px;height:57.80000000000001px;background:#fff;border:1px solid #828282;box-sizing:border-box"></div>
<span class="t" style="left:594.4px;top:308px;font-size:7.6px;line-height:12px;transform:scaleX(0.82);color:#1e1e1e;">Read Access</span>
<div style="left:711.2px;top:309.6px;width:8.5px;height:8.300000000000011px;background:#fff;border:1px solid #5a5a5a;box-sizing:border-box"></div>
<div style="left:747px;top:309.6px;width:8px;height:8.300000000000011px;background:#fff;border:1px solid #5a5a5a;box-sizing:border-box"></div>
<svg style="left:711.2px;top:309.6px" width="8.5" height="8.3" viewBox="0 0 8.5 8.3"><path d="M1.8 4.2L3.6 6L6.8 2.2" stroke="#4a4a4a" stroke-width="1" fill="none"/></svg>
<span class="t" style="left:594.4px;top:319px;font-size:7.6px;line-height:12px;transform:scaleX(0.82);color:#1e1e1e;">Modify Access</span>
<div style="left:711.2px;top:320.3px;width:8.5px;height:8.300000000000011px;background:#fff;border:1px solid #5a5a5a;box-sizing:border-box"></div>
<div style="left:747px;top:320.3px;width:8px;height:8.300000000000011px;background:#fff;border:1px solid #5a5a5a;box-sizing:border-box"></div>
<svg style="left:711.2px;top:320.3px" width="8.5" height="8.3" viewBox="0 0 8.5 8.3"><path d="M1.8 4.2L3.6 6L6.8 2.2" stroke="#4a4a4a" stroke-width="1" fill="none"/></svg>
<span class="t" style="left:594.4px;top:330px;font-size:7.6px;line-height:12px;transform:scaleX(0.82);color:#1e1e1e;">Delete Access</span>
<div style="left:711.2px;top:331px;width:8.5px;height:8.300000000000011px;background:#fff;border:1px solid #5a5a5a;box-sizing:border-box"></div>
<div style="left:747px;top:331px;width:8px;height:8.300000000000011px;background:#fff;border:1px solid #5a5a5a;box-sizing:border-box"></div>
<svg style="left:711.2px;top:331.0px" width="8.5" height="8.3" viewBox="0 0 8.5 8.3"><path d="M1.8 4.2L3.6 6L6.8 2.2" stroke="#4a4a4a" stroke-width="1" fill="none"/></svg>
<span class="t" style="left:594.4px;top:340px;font-size:7.6px;line-height:12px;transform:scaleX(0.82);color:#1e1e1e;">All Access</span>
<div style="left:711.2px;top:341.4px;width:8.5px;height:8.300000000000011px;background:#fff;border:1px solid #5a5a5a;box-sizing:border-box"></div>
<div style="left:747px;top:341.4px;width:8px;height:8.300000000000011px;background:#fff;border:1px solid #5a5a5a;box-sizing:border-box"></div>
<svg style="left:711.2px;top:341.4px" width="8.5" height="8.3" viewBox="0 0 8.5 8.3"><path d="M1.8 4.2L3.6 6L6.8 2.2" stroke="#4a4a4a" stroke-width="1" fill="none"/></svg>
<span class="t" style="left:594.4px;top:351px;font-size:7.6px;line-height:12px;transform:scaleX(0.82);color:#1e1e1e;">Special permissions</span>
<div style="left:711.2px;top:352.1px;width:8.5px;height:8.300000000000011px;background:#fff;border:1px solid #d5d5d5;box-sizing:border-box"></div>
<div style="left:747px;top:352.1px;width:8px;height:8.300000000000011px;background:#fff;border:1px solid #d5d5d5;box-sizing:border-box"></div>
<svg style="left:711.2px;top:352.1px" width="8.5" height="8.3" viewBox="0 0 8.5 8.3"><path d="M1.8 4.2L3.6 6L6.8 2.2" stroke="#cccccc" stroke-width="1" fill="none"/></svg>
<span class="t" style="left:587.5px;top:368px;font-size:7.6px;line-height:12px;transform:scaleX(0.82);color:#1e1e1e;">For special permissions or advanced settings,</span>
<span class="t" style="left:587.5px;top:375px;font-size:7.6px;line-height:12px;transform:scaleX(0.82);color:#1e1e1e;">click Advanced.</span>
<div style="left:722.3px;top:369.1px;width:53.40000000000009px;height:13.0px;background:#f0f0f0;border-top:1px solid #f8f8f8;border-left:1px solid #f8f8f8;border-bottom:1px solid #5a5a5a;border-right:1px solid #5a5a5a;box-shadow:inset -1px -1px 0 #a8a8a8;box-sizing:border-box"></div>
<span class="t" style="left:722.3px;top:369.1px;width:65.1px;height:13.0px;line-height:13.0px;text-align:center;font-size:7.6px;transform:scaleX(0.82);color:#1e1e1e">Advanced</span>
<div style="left:644.2px;top:408.8px;width:44.19999999999993px;height:13.199999999999989px;background:#f0f0f0;border:1px solid #707070;box-shadow:inset -1px -1px 0 #8a8a8a, inset 1px 1px 0 #fff;box-sizing:border-box"></div>
<span class="t" style="left:644.2px;top:408.8px;width:53.9px;height:13.199999999999989px;line-height:13.199999999999989px;text-align:center;font-size:7.6px;transform:scaleX(0.82);color:#1e1e1e">OK</span>
<div style="left:692.4px;top:408.8px;width:43.60000000000002px;height:13.0px;background:#f0f0f0;border-top:1px solid #f8f8f8;border-left:1px solid #f8f8f8;border-bottom:1px solid #5a5a5a;border-right:1px solid #5a5a5a;box-shadow:inset -1px -1px 0 #a8a8a8;box-sizing:border-box"></div>
<span class="t" style="left:692.4px;top:408.8px;width:53.2px;height:13.0px;line-height:13.0px;text-align:center;font-size:7.6px;transform:scaleX(0.82);color:#1e1e1e">Cancel</span>
<div style="left:739.9px;top:408.8px;width:43.89999999999998px;height:13.0px;background:#f0f0f0;border-top:1px solid #f8f8f8;border-left:1px solid #f8f8f8;border-bottom:1px solid #8a8a8a;border-right:1px solid #8a8a8a;box-shadow:inset -1px -1px 0 #c0c0c0;box-sizing:border-box"></div>
<span class="t" style="left:739.9px;top:408.8px;width:53.5px;height:13.0px;line-height:13.0px;text-align:center;font-size:7.6px;transform:scaleX(0.82);color:#a8a8a8">Apply</span>
</body></html>
